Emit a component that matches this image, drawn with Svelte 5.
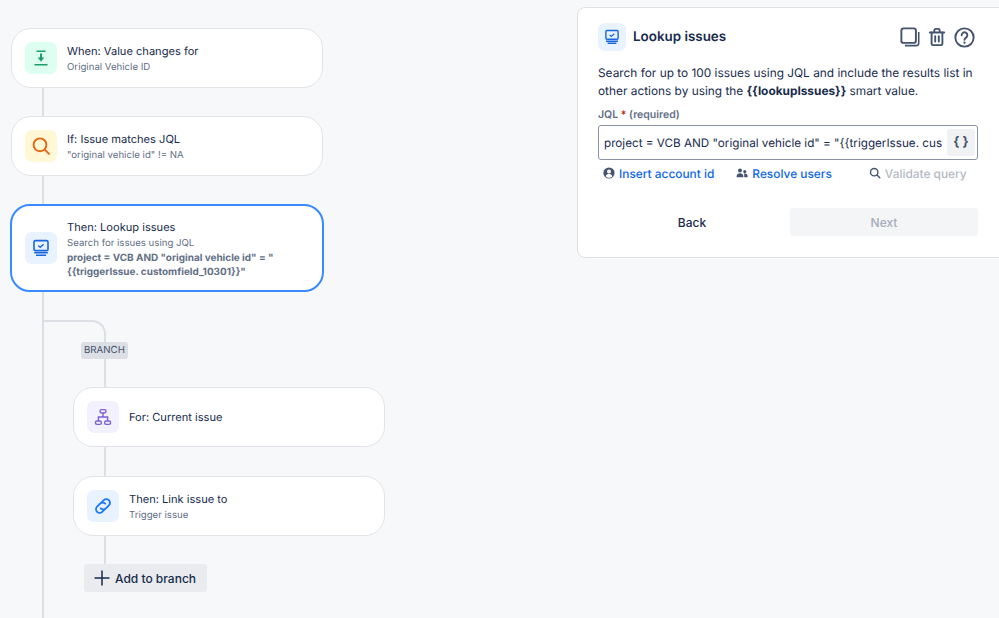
<script>
  const top = [
    { title: 'When: Value changes for', sub: 'Original Vehicle ID', icon: 'field', tint: 'green' },
    { title: 'If: Issue matches JQL', sub: '"original vehicle id" != NA', icon: 'search', tint: 'yellow' }
  ];
  const branch = [
    { title: 'For: Current issue', sub: '', icon: 'tree', tint: 'purple' },
    { title: 'Then: Link issue to', sub: 'Trigger issue', icon: 'link', tint: 'blue' }
  ];
</script>

{#snippet icon(name)}
  {#if name === 'field'}
    <svg viewBox="0 0 32 32" width="32" height="32" fill="none" stroke="#1f9d6b" stroke-width="1.6">
      <path d="M11.5 9.2h9M9.5 22.8h13" />
      <path d="M16 11.5v7" stroke-width="2" />
      <path d="M12.6 15.6h6.8L16 19.6z" fill="#1f9d6b" stroke="none" />
    </svg>
  {:else if name === 'search'}
    <svg viewBox="0 0 32 32" width="32" height="32" fill="none" stroke="#e8650f" stroke-width="1.9" stroke-linecap="round">
      <circle cx="15" cy="14.8" r="6.4" />
      <path d="M19.8 19.6l4.2 4.2" />
    </svg>
  {:else if name === 'monitor'}
    <svg viewBox="0 0 32 32" width="32" height="32" fill="none" stroke="#1868db" stroke-width="1.6">
      <rect x="9" y="8.6" width="14" height="10" rx="1.4" />
      <path d="M13.2 13.6l2 1.7 3.4-3" stroke-width="1.3" />
      <path d="M9.2 20.8h13.6M11 23.2h10" />
    </svg>
  {:else if name === 'tree'}
    <svg viewBox="0 0 32 32" width="32" height="32" fill="none" stroke="#7c5fd6" stroke-width="1.4">
      <rect x="13" y="8.6" width="6" height="3.4" rx="1.7" />
      <rect x="8.4" y="20" width="6" height="3.4" rx="1.7" />
      <rect x="17.6" y="20" width="6" height="3.4" rx="1.7" />
      <path d="M16 12v4M11.4 20v-4h9.2v4" />
    </svg>
  {:else if name === 'link'}
    <svg viewBox="0 0 32 32" width="32" height="32" fill="none" stroke="#1d7afc" stroke-width="1.9" stroke-linecap="round">
      <path d="M14.6 12.4l2.2-2.2a3.6 3.6 0 0 1 5.1 5.1l-3 3a3.6 3.6 0 0 1-5.1 0" />
      <path d="M17.4 19.6l-2.2 2.2a3.6 3.6 0 0 1-5.1-5.1l3-3a3.6 3.6 0 0 1 5.1 0" />
    </svg>
  {/if}
{/snippet}

{#snippet card(item)}
  <div class="card">
    <span class="tile {item.tint}">{@render icon(item.icon)}</span>
    <div class="copy">
      <div class="title">{item.title}</div>
      {#if item.sub}<div class="sub">{item.sub}</div>{/if}
    </div>
  </div>
{/snippet}

<main class="page">
  <section class="flow">
    {@render card(top[0])}
    <div class="link-line"></div>
    {@render card(top[1])}
    <div class="link-line"></div>

    <div class="card selected">
      <span class="tile blue">{@render icon('monitor')}</span>
      <div class="copy">
        <div class="title">Then: Lookup issues</div>
        <div class="sub">Search for issues using JQL</div>
        <div class="sub strong">project = VCB AND "original vehicle id" = "<br />{'{{'}triggerIssue. customfield_10301{'}}'}"</div>
      </div>
    </div>

    <div class="rail">
      <div class="curve"></div>
      <div class="branch">
        <span class="badge">BRANCH</span>
        <div class="branch-line first"></div>
        {@render card(branch[0])}
        <div class="branch-line"></div>
        {@render card(branch[1])}
        <div class="branch-line last"></div>
        <button type="button" class="add">
          <svg viewBox="0 0 16 16" width="16" height="16" fill="none" stroke="#172b4d" stroke-width="1.5"><path d="M8 0.5v15M0.5 8h15" /></svg>
          Add to branch
        </button>
      </div>
    </div>
  </section>

  <aside class="panel">
    <header class="head">
      <span class="tile blue small">{@render icon('monitor')}</span>
      <h2>Lookup issues</h2>
      <div class="tools">
        <svg viewBox="0 0 22 22" width="20" height="20" fill="none" stroke="#44546f" stroke-width="2.1">
          <rect x="1.5" y="1.5" width="16" height="16" rx="2.5" />
          <path d="M20.6 5.5v12a3 3 0 0 1-3 3H5.5" stroke-width="1.7" />
        </svg>
        <svg viewBox="0 0 20 22" width="18" height="20" fill="none" stroke="#44546f" stroke-width="2.1" stroke-linecap="round">
          <path d="M2 6h16M7 5.5V3.6A1.6 1.6 0 0 1 8.6 2h2.8A1.6 1.6 0 0 1 13 3.6v1.9" />
          <path d="M4 6v12.5A1.5 1.5 0 0 0 5.5 20h9a1.5 1.5 0 0 0 1.5-1.5V6" />
          <path d="M8 10v6M12 10v6" />
        </svg>
        <svg viewBox="0 0 22 22" width="21" height="21" fill="none" stroke="#44546f" stroke-width="2">
          <circle cx="11" cy="11" r="9.6" />
          <path d="M8 8.6a3 3 0 1 1 4.6 2.5c-1 .6-1.6 1.1-1.6 2.3" stroke-linecap="round" />
          <circle cx="11" cy="16.4" r="1.2" fill="#44546f" stroke="none" />
        </svg>
      </div>
    </header>

    <p class="desc">Search for up to 100 issues using JQL and include the results list in other actions by using the <b>{'{{'}lookupIssues{'}}'}</b> smart value.</p>

    <div class="label">JQL <span class="req">*</span> (required)</div>
    <div class="input">
      <span class="value">project = VCB AND "original vehicle id" = "{'{{'}triggerIssue. customfield_10301{'}}'}"</span>
      <span class="braces">{'{ }'}</span>
    </div>

    <div class="links">
      <span class="action one">
        <svg viewBox="0 0 12 12" width="12" height="12"><circle cx="6" cy="6" r="5.6" fill="#44546f" /><circle cx="6" cy="4.6" r="2" fill="#fff" /><path d="M2.6 9.2c.6-1.5 2-2.1 3.4-2.1s2.8.6 3.4 2.1A4.6 4.6 0 0 1 6 10.8a4.6 4.6 0 0 1-3.4-1.6z" fill="#fff" /></svg>
        Insert account id
      </span>
      <span class="action two">
        <svg viewBox="0 0 12 12" width="12" height="12" fill="#44546f"><circle cx="4" cy="3.4" r="2" /><circle cx="8.8" cy="4.6" r="1.6" /><path d="M0.6 9.6c0-2.2 1.5-3.4 3.4-3.4s3.4 1.2 3.4 3.4v.6H.6z" /><path d="M8.2 10.2h3.4V9c0-1.5-1-2.6-2.7-2.6-.4 0-.7 0-1 .2.5.7.3 2.4.3 3.6z" /></svg>
        Resolve users
      </span>
      <span class="action off">
        <svg viewBox="0 0 12 12" width="12" height="12" fill="none" stroke="#44546f" stroke-width="1.4" stroke-linecap="round"><circle cx="5.2" cy="5.2" r="3.7" /><path d="M8 8l2.8 2.8" /></svg>
        Validate query
      </span>
    </div>

    <div class="footer">
      <button type="button" class="back">Back</button>
      <button type="button" class="next" disabled>Next</button>
    </div>
  </aside>
</main>

<style>
  :global(body) {
    margin: 0;
    background: #f7f8f9;
  }

  .page {
    display: flex;
    height: 618px;
    overflow: hidden;
    font-family: Inter, "Liberation Sans", sans-serif;
    text-rendering: geometricPrecision;
    color: #172b4d;
  }

  .flow {
    width: 375px;
    flex-shrink: 0;
    padding: 28px 0 0 11px;
    box-sizing: border-box;
    display: flex;
    flex-direction: column;
    margin-right: 202px;
  }

  .card {
    width: 312px;
    min-height: 60px;
    box-sizing: border-box;
    display: flex;
    align-items: center;
    gap: 10px;
    padding: 0 13px;
    background: #fff;
    border: 1px solid #e2e4e9;
    border-radius: 20px;
    flex-shrink: 0;
  }

  .card.selected {
    width: 314px;
    height: 88px;
    margin-left: -1px;
    border: 2px solid #388bff;
  }

  .copy {
    padding-top: 2px;
  }

  .tile {
    width: 32px;
    height: 32px;
    border-radius: 7px;
    flex-shrink: 0;
    display: block;
  }

  .tile svg {
    display: block;
  }

  .tile.green { background: #dcfff1; }
  .tile.yellow { background: #fff7d6; }
  .tile.blue { background: #e9f2ff; }
  .tile.purple { background: #f3f0ff; }

  .tile.small {
    width: 28px;
    height: 28px;
  }

  .tile.small svg {
    width: 28px;
    height: 28px;
  }

  .title {
    margin-bottom: 2px;
    font-size: 11.1px;
    line-height: 16px;
    color: #172b4d;
  }

  .sub {
    font-size: 9.65px;
    line-height: 14px;
    color: #626f86;
  }

  .sub.strong {
    font-size: 9.95px;
    font-weight: 700;
  }

  .link-line {
    width: 2px;
    height: 28px;
    margin-left: 31px;
    background: #dcdfe4;
    flex-shrink: 0;
  }

  .rail {
    flex: 1;
    margin-left: 31px;
    border-left: 2px solid #dcdfe4;
    padding-top: 28px;
    display: flex;
    flex-direction: column;
  }

  .curve {
    width: 60px;
    height: 20px;
    box-sizing: content-box;
    border-top: 2px solid #dcdfe4;
    border-right: 2px solid #dcdfe4;
    border-top-right-radius: 14px;
    flex-shrink: 0;
  }

  .branch {
    margin-left: 29px;
    display: flex;
    flex-direction: column;
    align-items: flex-start;
  }

  .badge {
    margin-left: 8px;
    padding: 0 3px;
    height: 17px;
    line-height: 18px;
    background: #dcdfe4;
    border-radius: 3px;
    font-size: 9.7px;
    font-weight: 400;
    color: #44546f;
  }

  .branch-line {
    width: 2px;
    height: 29px;
    margin-left: 31px;
    background: #dcdfe4;
    flex-shrink: 0;
  }

  .branch-line.first,
  .branch-line.last {
    height: 28px;
  }

  .add {
    display: flex;
    align-items: center;
    gap: 5px;
    margin-left: 11px;
    width: 123px;
    height: 28px;
    padding: 0 0 0 10px;
    border: 0;
    border-radius: 3px;
    background: #e9ebee;
    font: 500 12px Inter, "Liberation Sans", sans-serif;
    color: #172b4d;
  }

  .panel {
    width: 440px;
    height: 251px;
    margin-top: 7px;
    flex-shrink: 0;
    box-sizing: border-box;
    padding: 15px 0 0 20px;
    background: #fff;
    border: 1px solid #dfe1e6;
    border-radius: 8px;
  }

  .head {
    display: flex;
    align-items: center;
    width: 380px;
    height: 28px;
    gap: 7px;
  }

  h2 {
    margin: 0;
    flex: 1;
    font-size: 13.4px;
    font-weight: 600;
  }

  .tools {
    display: flex;
    align-items: center;
    gap: 8px;
    margin-right: 3px;
  }

  .tools svg {
    display: block;
  }

  .desc {
    margin: 13px 0 0;
    width: 380px;
    font-size: 11.87px;
    line-height: 18px;
    color: #172b4d;
  }

  .desc b {
    font-weight: 700;
  }

  .label {
    margin-top: 7px;
    font-size: 10.5px;
    line-height: 16px;
    font-weight: 600;
    color: #626f86;
  }

  .req {
    color: #bf2600;
  }

  .input {
    margin-top: 2px;
    width: 380px;
    height: 35px;
    box-sizing: border-box;
    display: flex;
    align-items: center;
    padding: 0 2px 0 5px;
    border: 1px solid #8993a5;
    border-radius: 3px;
    gap: 5px;
  }

  .value {
    flex: 1;
    min-width: 0;
    overflow: hidden;
    white-space: nowrap;
    font-size: 11.7px;
  }

  .braces {
    width: 28px;
    height: 27px;
    line-height: 26px;
    text-align: center;
    border-radius: 3px;
    background: #f1f2f4;
    font-size: 13px;
    font-weight: 700;
    color: #44546f;
    flex-shrink: 0;
  }

  .links {
    display: flex;
    margin-top: 5px;
    height: 16px;
    align-items: center;
  }

  .action {
    display: flex;
    align-items: center;
    gap: 4px;
    font-size: 11.9px;
    font-weight: 500;
    color: #0c66e4;
  }

  .action svg {
    flex-shrink: 0;
  }

  .one { margin-left: 5px; }
  .two { margin-left: 22px; }
  .off {
    margin-left: 37px;
    color: #b3b9c4;
  }

  .footer {
    display: flex;
    margin-top: 27px;
    width: 380px;
    gap: 4px;
  }

  .footer button {
    height: 28px;
    border: 0;
    border-radius: 3px;
    background: transparent;
    font: 500 12px Inter, "Liberation Sans", sans-serif;
  }

  .back {
    width: 188px;
    color: #172b4d;
  }

  .footer .next {
    flex: 1;
    background: #f4f5f7;
    color: #a5adba;
  }
</style>
